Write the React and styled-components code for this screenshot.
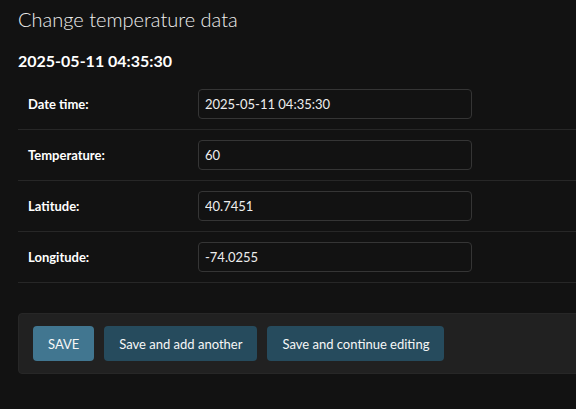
import React from "react";
import styled, { createGlobalStyle } from "styled-components";

const Global = createGlobalStyle`
  html, body { margin: 0; padding: 0; background: #121212; overflow: hidden; }
  body { font-family: Lato, "Open Sans", "Liberation Sans", sans-serif; color: #eeeeee; font-size: 13px; }
`;

const Page = styled.div`
  width: 620px;
  padding: 7px 0 0 18px;
`;

const Title = styled.h1`
  margin: 0 0 20px;
  font-size: 20px;
  font-weight: 300;
  line-height: 24px;
  color: #eeeeee;
`;

const Subhead = styled.h2`
  margin: 0 0 8px;
  font-size: 16px;
  font-weight: 700;
  line-height: 20px;
  color: #ffffff;
`;

const Fieldset = styled.fieldset`
  margin: 0 0 30px;
  padding: 0;
  border: 0;
`;

const Row = styled.div`
  display: flex;
  align-items: center;
  padding: 10px;
  border-bottom: 1px solid #272727;
`;

const Label = styled.label`
  width: 160px;
  padding-right: 10px;
  font-weight: 700;
  font-size: 13px;
  color: #ffffff;
`;

const Input = styled.input`
  box-sizing: border-box;
  width: 274px;
  height: 30px;
  padding: 5px 6px;
  margin: 0;
  font: inherit;
  font-size: 13px;
  color: #eeeeee;
  background: #121212;
  border: 1px solid #353535;
  border-radius: 4px;
  outline: none;
`;

const SubmitRow = styled.div`
  display: flex;
  gap: 10px;
  padding: 12px 14px;
  background: #212121;
  border: 1px solid #272727;
  border-radius: 4px;
`;

const Button = styled.button`
  height: 35px;
  padding: 0 15px;
  border: 0;
  border-radius: 4px;
  font: inherit;
  font-size: 13px;
  color: #f7f7f7;
  background: ${(p) => (p.$default ? "#417690" : "#264b5d")};
  text-transform: ${(p) => (p.$default ? "uppercase" : "none")};
  cursor: pointer;
`;

const fields = [
  ["Date time:", "2025-05-11 04:35:30"],
  ["Temperature:", "60"],
  ["Latitude:", "40.7451"],
  ["Longitude:", "-74.0255"],
];

export default function App() {
  return (
    <>
      <Global />
      <Page>
        <Title>Change temperature data</Title>
        <Subhead>2025-05-11 04:35:30</Subhead>
        <Fieldset>
          {fields.map(([label, value]) => (
            <Row key={label}>
              <Label>{label}</Label>
              <Input defaultValue={value} />
            </Row>
          ))}
        </Fieldset>
        <SubmitRow>
          <Button $default>Save</Button>
          <Button>Save and add another</Button>
          <Button>Save and continue editing</Button>
        </SubmitRow>
      </Page>
    </>
  );
}
